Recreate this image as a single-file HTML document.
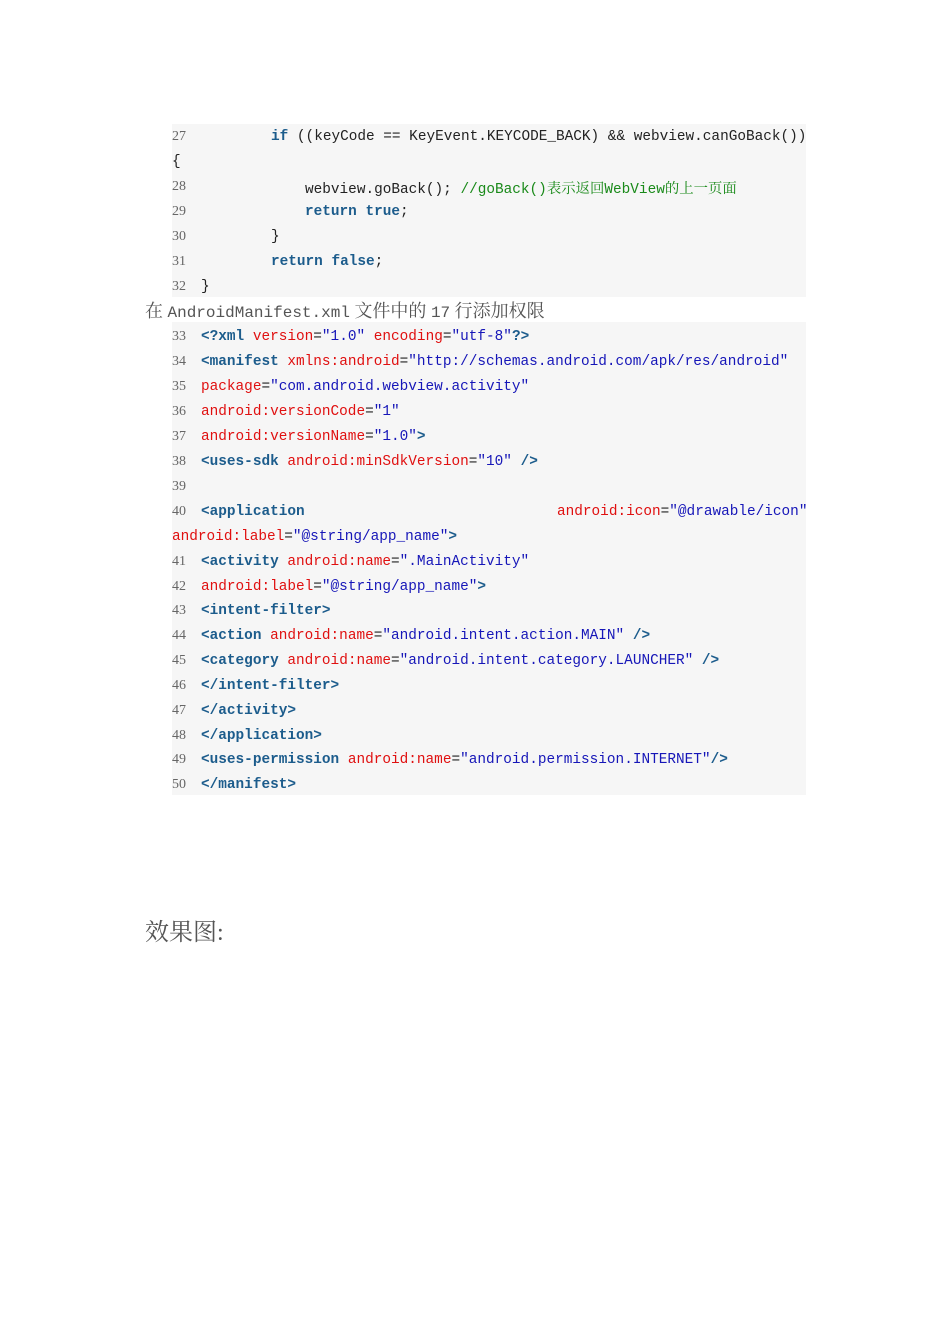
<!DOCTYPE html>
<html><head><meta charset="utf-8"><style>
body{margin:0;width:950px;height:1344px;background:#fff;position:relative;overflow:hidden}
.bg{position:absolute;left:172px;width:634px;background:#f6f6f6}
.l{position:absolute;height:25px;line-height:25px;white-space:pre;font-family:"Liberation Mono","Noto Sans CJK SC",monospace;font-size:14.4px;color:#222;margin-top:2px}
.n{position:absolute;left:172px;height:25px;line-height:25px;font-family:"Liberation Serif",serif;font-size:14px;color:#666;margin-top:1px}
.k{color:#1c5c8c;font-weight:bold}
.a{color:#e01010}
.s{color:#1616b8}
.c{color:#1a8a1a}
.cj{font-family:"Noto Serif CJK SC","Liberation Serif",serif;font-size:14.4px}
.h{position:absolute;left:145px;font-family:"Liberation Serif","Noto Serif CJK SC",serif;color:#555}
.hm{font-family:"Liberation Mono",monospace;font-size:16px}
</style></head><body>
<div class="bg" style="top:124px;height:173px"></div>
<div class="bg" style="top:322px;height:473px"></div>

<div class="n" style="top:123px">27</div><div class="l" style="left:271px;top:123px"><span class="k">if</span> ((keyCode == KeyEvent.KEYCODE_BACK) &amp;&amp; webview.canGoBack())</div>
<div class="l" style="left:172px;top:148px">{</div>
<div class="n" style="top:173px">28</div><div class="l" style="left:305px;top:173px">webview.goBack(); <span class="c">//goBack()<span class="cj">表示返回</span>WebView<span class="cj">的上一页面</span></span></div>
<div class="n" style="top:198px">29</div><div class="l" style="left:305px;top:198px"><span class="k">return true</span>;</div>
<div class="n" style="top:223px">30</div><div class="l" style="left:271px;top:223px">}</div>
<div class="n" style="top:248px">31</div><div class="l" style="left:271px;top:248px"><span class="k">return false</span>;</div>
<div class="n" style="top:273px">32</div><div class="l" style="left:201px;top:273px">}</div>

<div class="h" style="top:299px;font-size:18px;line-height:25px">在 <span class="hm">AndroidManifest.xml</span> 文件中的 <span class="hm">17</span> 行添加权限</div>

<div class="n" style="top:323px">33</div><div class="l" style="left:201px;top:323px"><span class="k">&lt;?xml</span> <span class="a">version</span>=<span class="s">"1.0"</span> <span class="a">encoding</span>=<span class="s">"utf-8"</span><span class="k">?&gt;</span></div>
<div class="n" style="top:348px">34</div><div class="l" style="left:201px;top:348px"><span class="k">&lt;manifest</span> <span class="a">xmlns:android</span>=<span class="s">"http://schemas.android.com/apk/res/android"</span></div>
<div class="n" style="top:373px">35</div><div class="l" style="left:201px;top:373px"><span class="a">package</span>=<span class="s">"com.android.webview.activity"</span></div>
<div class="n" style="top:398px">36</div><div class="l" style="left:201px;top:398px"><span class="a">android:versionCode</span>=<span class="s">"1"</span></div>
<div class="n" style="top:423px">37</div><div class="l" style="left:201px;top:423px"><span class="a">android:versionName</span>=<span class="s">"1.0"</span><span class="k">&gt;</span></div>
<div class="n" style="top:448px">38</div><div class="l" style="left:201px;top:448px"><span class="k">&lt;uses-sdk</span> <span class="a">android:minSdkVersion</span>=<span class="s">"10"</span> <span class="k">/&gt;</span></div>
<div class="n" style="top:473px">39</div>
<div class="n" style="top:498px">40</div><div class="l" style="left:201px;top:498px"><span class="k">&lt;application</span></div>
<div class="l" style="left:557px;top:498px"><span class="a">android:icon</span>=<span class="s">"@drawable/icon"</span></div>
<div class="l" style="left:172px;top:523px"><span class="a">android:label</span>=<span class="s">"@string/app_name"</span><span class="k">&gt;</span></div>
<div class="n" style="top:548px">41</div><div class="l" style="left:201px;top:548px"><span class="k">&lt;activity</span> <span class="a">android:name</span>=<span class="s">".MainActivity"</span></div>
<div class="n" style="top:573px">42</div><div class="l" style="left:201px;top:573px"><span class="a">android:label</span>=<span class="s">"@string/app_name"</span><span class="k">&gt;</span></div>
<div class="n" style="top:597px">43</div><div class="l" style="left:201px;top:597px"><span class="k">&lt;intent-filter&gt;</span></div>
<div class="n" style="top:622px">44</div><div class="l" style="left:201px;top:622px"><span class="k">&lt;action</span> <span class="a">android:name</span>=<span class="s">"android.intent.action.MAIN"</span> <span class="k">/&gt;</span></div>
<div class="n" style="top:647px">45</div><div class="l" style="left:201px;top:647px"><span class="k">&lt;category</span> <span class="a">android:name</span>=<span class="s">"android.intent.category.LAUNCHER"</span> <span class="k">/&gt;</span></div>
<div class="n" style="top:672px">46</div><div class="l" style="left:201px;top:672px"><span class="k">&lt;/intent-filter&gt;</span></div>
<div class="n" style="top:697px">47</div><div class="l" style="left:201px;top:697px"><span class="k">&lt;/activity&gt;</span></div>
<div class="n" style="top:722px">48</div><div class="l" style="left:201px;top:722px"><span class="k">&lt;/application&gt;</span></div>
<div class="n" style="top:746px">49</div><div class="l" style="left:201px;top:746px"><span class="k">&lt;uses-permission</span> <span class="a">android:name</span>=<span class="s">"android.permission.INTERNET"</span><span class="k">/&gt;</span></div>
<div class="n" style="top:771px">50</div><div class="l" style="left:201px;top:771px"><span class="k">&lt;/manifest&gt;</span></div>

<div class="h" style="top:917px;font-size:24px;line-height:32px">效果图:</div>
</body></html>
